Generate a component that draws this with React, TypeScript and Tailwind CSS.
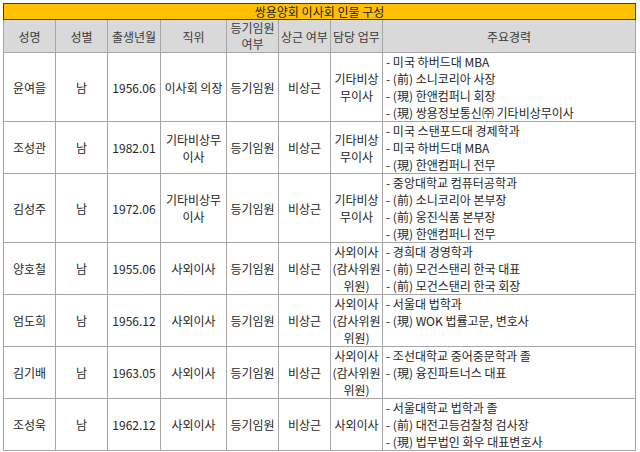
import React from "react";

type Row = {
  name: string;
  sex: string;
  birth: string;
  pos: React.ReactNode;
  reg: string;
  full: string;
  duty: React.ReactNode;
  career: string[];
  h: number;
};

const rows: Row[] = [
  {
    name: "윤여을",
    sex: "남",
    birth: "1956.06",
    pos: "이사회 의장",
    reg: "등기임원",
    full: "비상근",
    duty: (
      <>
        기타비상
        <br />
        무이사
      </>
    ),
    career: [
      "- 미국 하버드대 MBA",
      "- (前) 소니코리아 사장",
      "- (現) 한앤컴퍼니 회장",
      "- (現) 쌍용정보통신㈜ 기타비상무이사",
    ],
    h: 68,
  },
  {
    name: "조성관",
    sex: "남",
    birth: "1982.01",
    pos: (
      <>
        기타비상무
        <br />
        이사
      </>
    ),
    reg: "등기임원",
    full: "비상근",
    duty: (
      <>
        기타비상
        <br />
        무이사
      </>
    ),
    career: ["- 미국 스탠포드대 경제학과", "- 미국 하버드대 MBA", "- (現) 한앤컴퍼니 전무"],
    h: 51,
  },
  {
    name: "김성주",
    sex: "남",
    birth: "1972.06",
    pos: (
      <>
        기타비상무
        <br />
        이사
      </>
    ),
    reg: "등기임원",
    full: "비상근",
    duty: (
      <>
        기타비상
        <br />
        무이사
      </>
    ),
    career: [
      "- 중앙대학교 컴퓨터공학과",
      "- (前) 소니코리아 본부장",
      "- (前) 웅진식품 본부장",
      "- (現) 한앤컴퍼니 전무",
    ],
    h: 68,
  },
  {
    name: "양호철",
    sex: "남",
    birth: "1955.06",
    pos: "사외이사",
    reg: "등기임원",
    full: "비상근",
    duty: (
      <>
        사외이사
        <br />
        (감사위원
        <br />
        위원)
      </>
    ),
    career: ["- 경희대 경영학과", "- (前) 모건스탠리 한국 대표", "- (前) 모건스탠리 한국 회장"],
    h: 51,
  },
  {
    name: "엄도희",
    sex: "남",
    birth: "1956.12",
    pos: "사외이사",
    reg: "등기임원",
    full: "비상근",
    duty: (
      <>
        사외이사
        <br />
        (감사위원
        <br />
        위원)
      </>
    ),
    career: ["- 서울대 법학과", "- (現) WOK 법률고문, 변호사"],
    h: 51,
  },
  {
    name: "김기배",
    sex: "남",
    birth: "1963.05",
    pos: "사외이사",
    reg: "등기임원",
    full: "비상근",
    duty: (
      <>
        사외이사
        <br />
        (감사위원
        <br />
        위원)
      </>
    ),
    career: ["- 조선대학교 중어중문학과 졸", "- (現) 융진파트너스 대표"],
    h: 51,
  },
  {
    name: "조성욱",
    sex: "남",
    birth: "1962.12",
    pos: "사외이사",
    reg: "등기임원",
    full: "비상근",
    duty: "사외이사",
    career: ["- 서울대학교 법학과 졸", "- (前) 대전고등검찰청 검사장", "- (現) 법무법인 화우 대표변호사"],
    h: 51,
  },
];

const cell = "border border-[#a6a6a6] text-center align-middle px-[1px] leading-[17px]";

export default function App() {
  return (
    <div
      className="bg-white w-[640px] h-[452px] pt-[3px] pl-[3px] text-[12px] text-[#262626]"
      style={{ fontFamily: '"Noto Sans CJK KR", "Noto Sans", sans-serif' }}
    >
      <table className="table-fixed w-[632px] border-collapse border border-[#595959]">
        <colgroup>
          <col className="w-[52px]" />
          <col className="w-[52px]" />
          <col className="w-[53px]" />
          <col className="w-[66px]" />
          <col className="w-[52px]" />
          <col className="w-[52px]" />
          <col className="w-[52px]" />
          <col className="w-[253px]" />
        </colgroup>
        <tbody>
          <tr className="h-[16px]">
            <td
              colSpan={8}
              className="bg-[#ffc000] border border-[#404040] text-center align-middle leading-[15px] text-[12px] text-[#1a1a1a]"
            >
              쌍용양회 이사회 인물 구성
            </td>
          </tr>
          <tr className="h-[32px] bg-[#d9d9d9] text-[#3a3a3a]">
            <td className={cell}>성명</td>
            <td className={cell}>성별</td>
            <td className={cell}>출생년월</td>
            <td className={cell}>직위</td>
            <td className="border border-[#a6a6a6] text-center align-middle px-[1px]">
              <div className="leading-[16px]">등기임원</div>
              <div className="leading-[16px]">여부</div>
            </td>
            <td className={cell}>상근 여부</td>
            <td className={cell}>담당 업무</td>
            <td className={cell}>주요경력</td>
          </tr>
          {rows.map((r, i) => (
            <tr key={i} style={{ height: r.h }}>
              <td className={cell}>{r.name}</td>
              <td className={cell}>{r.sex}</td>
              <td className={cell}>{r.birth}</td>
              <td className={cell}>{r.pos}</td>
              <td className={cell}>{r.reg}</td>
              <td className={cell}>{r.full}</td>
              <td className={cell}>{r.duty}</td>
              <td className="border border-[#a6a6a6] text-left align-top pl-[3px] leading-[17px] whitespace-nowrap">
                {r.career.map((c, j) => (
                  <div key={j} className="leading-[17px]">
                    {c}
                  </div>
                ))}
              </td>
            </tr>
          ))}
        </tbody>
      </table>
    </div>
  );
}
